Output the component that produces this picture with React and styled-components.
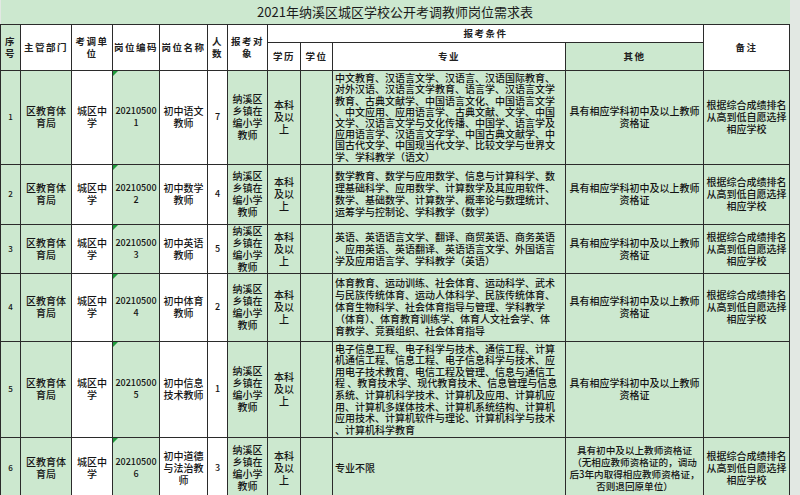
import React from "react";
import styled, { createGlobalStyle } from "styled-components";

const GREEN = "#cce8cf";
const LINE = "#2b2b2b";

const GlobalStyle = createGlobalStyle`
  html, body {
    margin: 0;
    padding: 0;
  }
  body {
    background: #e2e8e3;
    font-family: "Noto Sans CJK SC", "Noto Sans", sans-serif;
    color: #141414;
  }
`;

const Sheet = styled.table`
  width: 789px;
  border-collapse: collapse;
  table-layout: fixed;
`;

const Row = styled.tr`
  height: ${(p) => p.$h}px;
`;

const TitleCell = styled.td`
  background: ${GREEN};
  text-align: center;
  vertical-align: middle;
  font-size: 13px;
  color: #1a1a1a;
  padding: 0;
  border-bottom: 1px solid ${LINE};
`;

const Head = styled.th`
  background: ${(p) => (p.$green ? GREEN : "#fff")};
  border: 1px solid ${LINE};
  font-family: "Noto Sans CJK SC", "Liberation Serif", serif;
  font-size: 9.5px;
  font-weight: 700;
  line-height: 12px;
  letter-spacing: 1.5px;
  padding: 0 1px;
  text-align: center;
  vertical-align: middle;
  color: #222;
`;

const Cell = styled.td`
  position: relative;
  background: ${(p) => (p.$white ? "#fff" : GREEN)};
  border: 1px solid ${LINE};
  font-size: ${(p) => p.$size || 10}px;
  font-weight: 500;
  line-height: ${(p) => p.$lh || 12}px;
  text-align: ${(p) => p.$align || "center"};
  vertical-align: middle;
  padding: ${(p) => (p.$align === "left" ? "0 0 0 2px" : "0 1px")};
  white-space: nowrap;
  overflow: hidden;

  ${(p) =>
    p.$flag &&
    `
    &::before {
      content: "";
      position: absolute;
      top: 0;
      left: 0;
      border-top: 5px solid #1f9a3c;
      border-right: 5px solid transparent;
    }
  `}
`;

const Line = styled.span`
  display: block;
`;

const widths = [20, 51, 41, 47, 48, 20, 40, 33, 32, 233, 138, 86];

const rows = [
  {
    h: 94,
    no: "1",
    name: ["初中语文", "教师"],
    count: "7",
    major: [
      "中文教育、汉语言文学、汉语言、汉语国际教育、",
      "对外汉语、汉语言文学教育、语言学、汉语言文学",
      "教育、古典文献学、中国语言文化、中国语言文学",
      "、中文应用、应用语言学、古典文献、文学、中国",
      "文学、汉语言文学与文化传播、中国学、语言学及",
      "应用语言学、汉语言文字学、中国古典文献学、中",
      "国古代文学、中国现当代文学、比较文学与世界文",
      "学、学科教学（语文）",
    ],
    lh: 11.2,
  },
  {
    h: 60,
    no: "2",
    name: ["初中数学", "教师"],
    count: "4",
    major: [
      "数学教育、数学与应用数学、信息与计算科学、数",
      "理基础科学、应用数学、计算数学及其应用软件、",
      "数学、基础数学、计算数学、概率论与数理统计、",
      "运筹学与控制论、学科教学（数学）",
    ],
  },
  {
    h: 42,
    no: "3",
    name: ["初中英语", "教师"],
    count: "5",
    major: [
      "英语、英语语言文学、翻译、商贸英语、商务英语",
      "、应用英语、英语翻译、英语语言文学、外国语言",
      "学及应用语言学、学科教学（英语）",
    ],
  },
  {
    h: 68,
    no: "4",
    name: ["初中体育", "教师"],
    count: "2",
    major: [
      "体育教育、运动训练、社会体育、运动科学、武术",
      "与民族传统体育、运动人体科学、民族传统体育、",
      "体育生物科学、社会体育指导与管理、学科教学",
      "（体育）、体育教育训练学、体育人文社会学、体",
      "育教学、竞赛组织、社会体育指导",
    ],
  },
  {
    h: 96,
    no: "5",
    name: ["初中信息", "技术教师"],
    count: "1",
    major: [
      "电子信息工程、电子科学与技术、通信工程、计算",
      "机通信工程、信息工程、电子信息科学与技术、应",
      "用电子技术教育、电信工程及管理、信息与通信工",
      "程 、教育技术学、现代教育技术、信息管理与信息",
      "系统、计算机科学技术、计算机及应用、计算机应",
      "用、计算机多媒体技术、计算机系统结构、计算机",
      "应用技术、计算机软件与理论、计算机科学与技术",
      "、计算机科学教育",
    ],
    lh: 11.6,
    noNote: true,
  },
  {
    h: 61,
    no: "6",
    name: ["初中道德", "与法治教", "师"],
    count: "3",
    major: ["专业不限"],
    other: [
      "具有初中及以上教师资格证",
      "（无相应教师资格证的，调动",
      "后3年内取得相应教师资格证，",
      "否则退回原单位）",
    ],
  },
];

const defaultOther = ["具有相应学科初中及以上教师", "资格证"];
const note = ["根据综合成绩排名", "从高到低自愿选择", "相应学校"];

const Lines = ({ items }) => items.map((t, i) => <Line key={i}>{t}</Line>);

export default function App() {
  return (
    <>
      <GlobalStyle />
      <Sheet>
        <colgroup>
          {widths.map((w, i) => (
            <col key={i} style={{ width: w }} />
          ))}
        </colgroup>
        <tbody>
          <Row $h={24}>
            <TitleCell colSpan={12}>2021年纳溪区城区学校公开考调教师岗位需求表</TitleCell>
          </Row>
          <Row $h={18}>
            <Head rowSpan={2} $green>
              <Line>序</Line>
              <Line>号</Line>
            </Head>
            <Head rowSpan={2}>主管部门</Head>
            <Head rowSpan={2}>
              <Line>考调单</Line>
              <Line>位</Line>
            </Head>
            <Head rowSpan={2}>岗位编码</Head>
            <Head rowSpan={2}>岗位名称</Head>
            <Head rowSpan={2}>
              <Line>人</Line>
              <Line>数</Line>
            </Head>
            <Head rowSpan={2}>
              <Line>报考对</Line>
              <Line>象</Line>
            </Head>
            <Head colSpan={4}>报考条件</Head>
            <Head rowSpan={2}>备注</Head>
          </Row>
          <Row $h={28}>
            <Head>学历</Head>
            <Head>学位</Head>
            <Head>专业</Head>
            <Head $green>其他</Head>
          </Row>
          {rows.map((r) => (
            <Row key={r.no} $h={r.h}>
              <Cell $size={8}>{r.no}</Cell>
              <Cell>
                <Lines items={["区教育体", "育局"]} />
              </Cell>
              <Cell $white>
                <Lines items={["城区中", "学"]} />
              </Cell>
              <Cell $flag $size={9}>
                <Lines items={["20210500", r.no]} />
              </Cell>
              <Cell $white>
                <Lines items={r.name} />
              </Cell>
              <Cell $white $size={9}>
                {r.count}
              </Cell>
              <Cell>
                <Lines items={["纳溪区", "乡镇在", "编小学", "教师"]} />
              </Cell>
              <Cell>
                <Lines items={["本科", "及以", "上"]} />
              </Cell>
              <Cell />
              <Cell $align="left" $lh={r.lh || 12}>
                <Lines items={r.major} />
              </Cell>
              <Cell $size={r.other ? 9.6 : 10}>
                <Lines items={r.other || defaultOther} />
              </Cell>
              <Cell>{r.noNote ? null : <Lines items={note} />}</Cell>
            </Row>
          ))}
          <Row $h={24}>
            <Cell />
            <Cell />
            <Cell $white />
            <Cell $flag />
            <Cell $white />
            <Cell $white />
            <Cell />
            <Cell />
            <Cell />
            <Cell />
            <Cell />
            <Cell />
          </Row>
        </tbody>
      </Sheet>
    </>
  );
}
